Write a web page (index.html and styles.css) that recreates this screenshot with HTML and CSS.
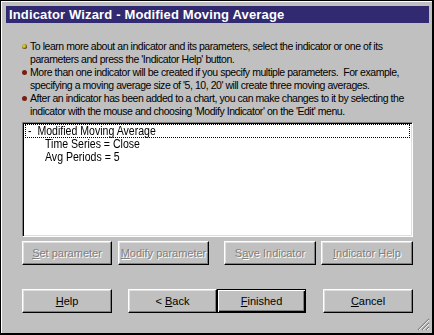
FILE: index.html
```html
<!DOCTYPE html>
<html lang="en">

<head>
    <meta charset="UTF-8" />
    <title>Indicator Wizard</title>
    <link rel="stylesheet" href="styles.css">
</head>

<body>
    <div class="window">
        <div class="titlebar">Indicator Wizard - Modified Moving Average</div>

        <ul class="notes">
            <li><span class="dot first"></span><span>To learn more about an indicator and its parameters, select the indicator or one of its<br>parameters and press the 'Indicator Help' button.</span></li>
            <li><span class="dot"></span><span>More than one indicator will be created if you specify multiple parameters.&nbsp; For example,<br>specifying a moving average size of '5, 10, 20' will create three moving averages.</span></li>
            <li><span class="dot"></span><span>After an indicator has been added to a chart, you can make changes to it by selecting the<br>indicator with the mouse and choosing 'Modify Indicator' on the 'Edit' menu.</span></li>
        </ul>

        <div class="listbox">
            <div class="tree-root"><span class="label">-&nbsp; Modified Moving Average</span></div>
            <div class="tree-leaf"><span class="label">Time Series = Close</span></div>
            <div class="tree-leaf"><span class="label">Avg Periods = 5</span></div>
        </div>

        <div class="btn-row top-row">
            <button class="btn disabled w90"><u>S</u>et parameter</button>
            <button class="btn disabled w91 gap6"><u>M</u>odify parameter</button>
            <button class="btn disabled w92 gap15">S<u>a</u>ve Indicator</button>
            <button class="btn disabled w92 gap5"><u>I</u>ndicator Help</button>
        </div>

        <div class="btn-row bottom-row">
            <button class="btn w90"><u>H</u>elp</button>
            <button class="btn w89 gap16">&lt; <u>B</u>ack</button>
            <button class="btn default w89"><u>F</u>inished</button>
            <button class="btn w90 gap17"><u>C</u>ancel</button>
        </div>

        <svg class="grip" width="13" height="13" viewBox="0 0 13 13">
            <path d="M12 1 L1 12 M12 5 L5 12 M12 9 L9 12" stroke="#808080" stroke-width="1.2" />
            <path d="M12 2 L2 12 M12 6 L6 12 M12 10 L10 12" stroke="#fff" stroke-width="0.8" />
        </svg>
    </div>
</body>

</html>
```

FILE: styles.css
```css
* {
    box-sizing: border-box;
    margin: 0;
    padding: 0;
}

body {
    width: 434px;
    height: 335px;
    overflow: hidden;
    background-color: #c0c0c0;
    font-family: "Liberation Sans", Arial, sans-serif;
    font-size: 11px;
    color: #000;
}

.window {
    position: relative;
    width: 434px;
    height: 335px;
    border: 1px solid #000;
    border-right-width: 2px;
    border-bottom-width: 2px;
    box-shadow: inset 1px 1px #fff;
    padding: 5px 3px 0 5px;
}

.titlebar {
    height: 17px;
    background-color: #312a70;
    color: #fff;
    font-weight: bold;
    font-size: 13px;
    line-height: 17px;
    padding-left: 3px;
    letter-spacing: 0.15px;
    white-space: nowrap;
}

.notes {
    list-style: none;
    margin-top: 17px;
}

.notes li {
    display: flex;
    align-items: flex-start;
    font-size: 10.5px;
    line-height: 13px;
    white-space: nowrap;
    letter-spacing: -0.45px;
}

.dot {
    flex: none;
    width: 5px;
    height: 5px;
    margin: 4px 3px 0 16px;
    border-radius: 50%;
    background-color: #7a1e12;
}

.dot.first {
    background: radial-gradient(circle at 40% 40%, #c8c830 30%, #6a3010 70%);
}

.listbox {
    width: 391px;
    height: 115px;
    margin: 4px 0 0 16px;
    background-color: #fff;
    border: 1px solid;
    border-color: #808080 #fff #fff #808080;
    box-shadow: inset 1px 1px #000, inset -1px -1px #dfdfdf;
    padding: 1px 2px 0 2px;
    font-size: 12px;
}

.label {
    display: inline-block;
    transform: scaleX(0.88);
    transform-origin: left center;
    white-space: nowrap;
}

.tree-root {
    height: 14px;
    line-height: 12px;
    border: 1px dotted #000;
    padding-left: 2px;
}

.tree-leaf {
    height: 12.5px;
    line-height: 12.5px;
    padding-left: 20px;
}

.btn-row {
    display: flex;
    margin-left: 16px;
}

.top-row {
    margin-top: 4px;
}

.bottom-row {
    margin-top: 24px;
}

.btn {
    height: 24px;
    background-color: #c0c0c0;
    border: 1px solid;
    border-color: #fff #000 #000 #fff;
    box-shadow: inset -1px -1px #808080, inset 1px 1px #dfdfdf;
    font-family: "Liberation Sans", Arial, sans-serif;
    font-size: 11px;
    color: #000;
    text-align: center;
}

.btn.default {
    border-color: #000;
    box-shadow: inset 1px 1px #fff, inset -1px -1px #000, inset -2px -2px #808080;
}

.btn.disabled {
    color: #808080;
    text-shadow: 1px 1px #fff;
}

.w89 { width: 89px; }
.w90 { width: 90px; }
.w91 { width: 91px; }
.w92 { width: 92px; }
.gap5 { margin-left: 5px; }
.gap6 { margin-left: 6px; }
.gap15 { margin-left: 15px; }
.gap16 { margin-left: 16px; }
.gap17 { margin-left: 17px; }

.grip {
    position: absolute;
    right: 2px;
    bottom: 2px;
}
```
